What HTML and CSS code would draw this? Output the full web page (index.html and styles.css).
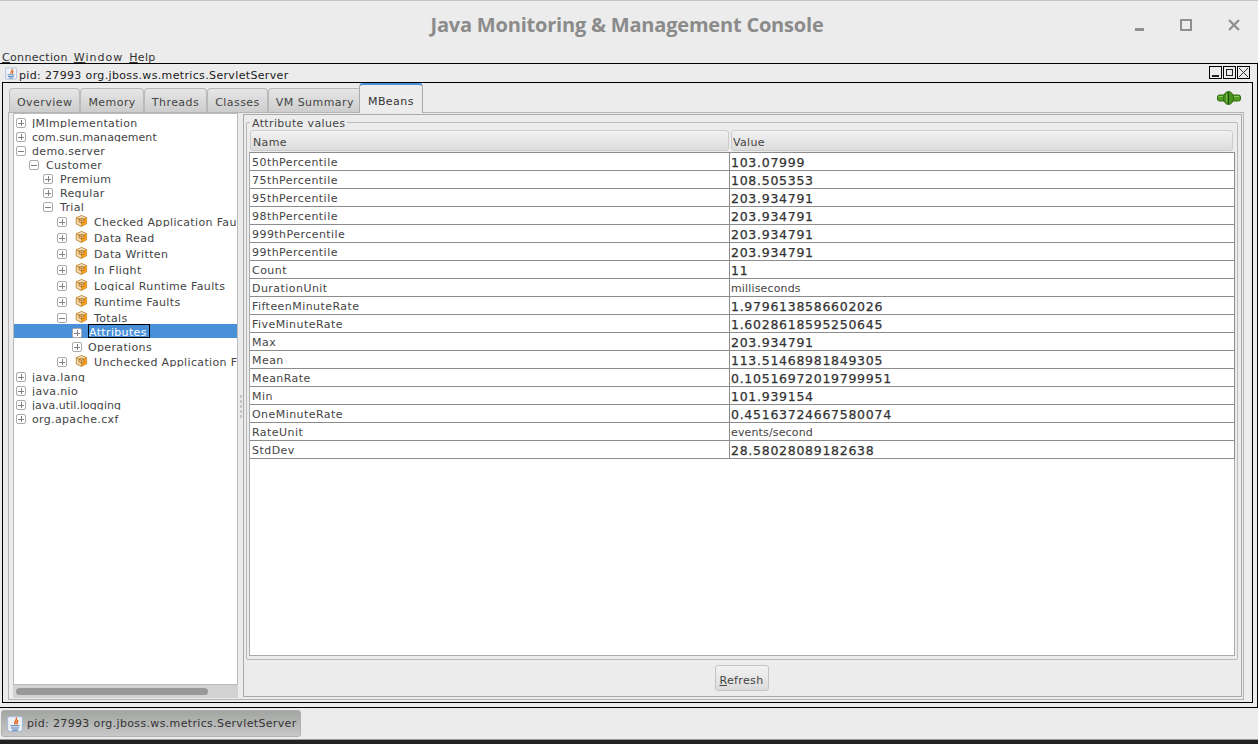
FILE: index.html
```html
<!DOCTYPE html>
<html lang="en">
<head>
    <meta charset="UTF-8">
    <title>Java Monitoring &amp; Management Console</title>
    <link rel="stylesheet" href="styles.css">
</head>
<body>
    <svg class="defs" width="0" height="0">
        <symbol id="cube" viewBox="0 0 14 14">
            <path d="M7 .7 13 3.200V10.300L7 13.300 1 10.300V3.200Z" fill="#ff9f10" stroke="#b8842e" stroke-width=".8"/>
            <path d="M1 3.200 7 5.700V13.300L1 10.300Z" fill="#f8dcae" stroke="#b8842e" stroke-width=".8"/>
            <path d="M7 .7 13 3.200 7 5.700 1 3.200Z" fill="#fbe8ca" stroke="#b8842e" stroke-width=".8"/>
            <path d="M7 3.500 10 4.800V8L7 9.500 4 8V4.800Z" fill="#f4b86a" stroke="#8a6020" stroke-width=".7"/>
            <path d="M4 4.800 7 6.200 10 4.800M7 6.200V9.500" fill="none" stroke="#8a6020" stroke-width=".6"/>
        </symbol>
        <symbol id="java" viewBox="0 0 14 14">
            <rect x=".5" y=".5" width="13" height="13" rx="1.500" fill="#eef2f8" stroke="#a8bcd6"/>
            <path d="M8 1.500C9.500 3.500 5.800 4.500 7 7.500M9.800 3.800C8.200 4.800 8.500 6 9 7.500" fill="none" stroke="#e0611a" stroke-width="1.300"/>
            <path d="M3 8.500H11M3.500 10.500H10.500M4.500 12.300H9.500" stroke="#4a7bb0"/>
        </symbol>
    </svg>

    <header class="titlebar">
        <h1>Java Monitoring &amp; Management Console</h1>
        <div class="wm-buttons">
            <span class="wm-min"></span>
            <span class="wm-max"></span>
            <svg width="12" height="12" viewBox="0 0 12 12"><path d="M1 1 11 11M11 1 1 11" stroke="#8f8f8f" stroke-width="2.300"/></svg>
        </div>
    </header>

    <nav class="menubar">
        <span><u>C</u>onnection</span>
        <span class="menu-wide"><u>W</u>indow</span>
        <span><u>H</u>elp</span>
    </nav>

    <main class="frame">
        <div class="frame-title">
            <svg class="frame-icon" width="12" height="13"><use href="#java"/></svg>
            <span class="frame-name">pid: 27993 org.jboss.ws.metrics.ServletServer</span>
            <div class="frame-buttons">
                <span class="fb"><i class="fb-min"></i></span>
                <span class="fb"><i class="fb-max"></i></span>
                <span class="fb"><svg width="11" height="11" viewBox="0 0 11 11"><path d="M1 1 10 10M10 1 1 10" stroke="#333" fill="none"/></svg></span>
            </div>
        </div>
        <div class="frame-body">
            <div class="tabs">
                <span class="tab">Overview</span>
                <span class="tab">Memory</span>
                <span class="tab">Threads</span>
                <span class="tab">Classes</span>
                <span class="tab">VM Summary</span>
                <span class="tab active">MBeans</span>
                <svg class="plug" width="24" height="14" viewBox="0 0 24 14">
                    <rect x=".5" y="4" width="23" height="6" rx="2" fill="#559c24" stroke="#2f6a12"/>
                    <path d="M1.500 5.500H22" stroke="#8cc85a"/>
                    <ellipse cx="11.500" cy="7" rx="5" ry="6.500" fill="#47921a" stroke="#2f6a12"/>
                    <path d="M11.500 1V13" stroke="#1f4f0a"/>
                    <path d="M9.500 3V11" stroke="#7ab84a"/>
                </svg>
            </div>
            <div class="tab-panel">
                <aside class="tree-pane">
                    <div class="tree">
                        <div class="node"><b class="box"></b><span class="label">JMImplementation</span></div>
                        <div class="node"><b class="box"></b><span class="label tight">com.sun.management</span></div>
                        <div class="node"><b class="box open"></b><span class="label">demo.server</span></div>
                        <div class="node l1"><b class="box open"></b><span class="label">Customer</span></div>
                        <div class="node l2"><b class="box"></b><span class="label">Premium</span></div>
                        <div class="node l2"><b class="box"></b><span class="label">Regular</span></div>
                        <div class="node l2"><b class="box open"></b><span class="label">Trial</span></div>
                        <div class="node l3 tall"><b class="box"></b><svg class="cube"><use href="#cube"/></svg><span class="label">Checked Application Fau</span></div>
                        <div class="node l3 tall"><b class="box"></b><svg class="cube"><use href="#cube"/></svg><span class="label">Data Read</span></div>
                        <div class="node l3 tall"><b class="box"></b><svg class="cube"><use href="#cube"/></svg><span class="label">Data Written</span></div>
                        <div class="node l3 tall"><b class="box"></b><svg class="cube"><use href="#cube"/></svg><span class="label">In Flight</span></div>
                        <div class="node l3 tall"><b class="box"></b><svg class="cube"><use href="#cube"/></svg><span class="label">Logical Runtime Faults</span></div>
                        <div class="node l3 tall"><b class="box"></b><svg class="cube"><use href="#cube"/></svg><span class="label">Runtime Faults</span></div>
                        <div class="node l3 tall"><b class="box open"></b><svg class="cube"><use href="#cube"/></svg><span class="label">Totals</span></div>
                        <div class="node l4 selected"><b class="box"></b><span class="label focus">Attributes</span></div>
                        <div class="node l4"><b class="box"></b><span class="label">Operations</span></div>
                        <div class="node l3 tall"><b class="box"></b><svg class="cube"><use href="#cube"/></svg><span class="label">Unchecked Application F</span></div>
                        <div class="node"><b class="box"></b><span class="label">java.lang</span></div>
                        <div class="node"><b class="box"></b><span class="label">java.nio</span></div>
                        <div class="node"><b class="box"></b><span class="label tight">java.util.logging</span></div>
                        <div class="node"><b class="box"></b><span class="label">org.apache.cxf</span></div>
                    </div>
                    <div class="hscroll"><div class="thumb"></div></div>
                </aside>
                <div class="splitter"><i></i><i></i><i></i><i></i><i></i></div>
                <section class="details">
                    <fieldset class="attrs">
                        <legend>Attribute values</legend>
                        <div class="table-head">
                            <span class="col-name">Name</span>
                            <span class="col-value">Value</span>
                        </div>
                        <div class="table-body">
                            <div class="row"><span class="col-name">50thPercentile</span><span class="col-value num">103.07999</span></div>
                            <div class="row"><span class="col-name">75thPercentile</span><span class="col-value num">108.505353</span></div>
                            <div class="row"><span class="col-name">95thPercentile</span><span class="col-value num">203.934791</span></div>
                            <div class="row"><span class="col-name">98thPercentile</span><span class="col-value num">203.934791</span></div>
                            <div class="row"><span class="col-name">999thPercentile</span><span class="col-value num">203.934791</span></div>
                            <div class="row"><span class="col-name">99thPercentile</span><span class="col-value num">203.934791</span></div>
                            <div class="row"><span class="col-name">Count</span><span class="col-value num">11</span></div>
                            <div class="row"><span class="col-name">DurationUnit</span><span class="col-value">milliseconds</span></div>
                            <div class="row"><span class="col-name">FifteenMinuteRate</span><span class="col-value num">1.9796138586602026</span></div>
                            <div class="row"><span class="col-name">FiveMinuteRate</span><span class="col-value num">1.6028618595250645</span></div>
                            <div class="row"><span class="col-name">Max</span><span class="col-value num">203.934791</span></div>
                            <div class="row"><span class="col-name">Mean</span><span class="col-value num">113.51468981849305</span></div>
                            <div class="row"><span class="col-name">MeanRate</span><span class="col-value num">0.10516972019799951</span></div>
                            <div class="row"><span class="col-name">Min</span><span class="col-value num">101.939154</span></div>
                            <div class="row"><span class="col-name">OneMinuteRate</span><span class="col-value num">0.45163724667580074</span></div>
                            <div class="row"><span class="col-name">RateUnit</span><span class="col-value">events/second</span></div>
                            <div class="row"><span class="col-name">StdDev</span><span class="col-value num">28.58028089182638</span></div>
                        </div>
                    </fieldset>
                    <div class="actions"><button class="refresh"><u>R</u>efresh</button></div>
                </section>
            </div>
        </div>
    </main>

    <footer class="taskbar">
        <div class="task">
            <svg width="16" height="16"><use href="#java"/></svg>
            <span>pid: 27993 org.jboss.ws.metrics.ServletServer</span>
        </div>
    </footer>
</body>
</html>
```
FILE: styles.css
```css
* {
    box-sizing: border-box;
}
html, body {
    margin: 0;
    height: 744px;
    overflow: hidden;
}
body {
    font-family: "DejaVu Sans", sans-serif;
    font-size: 11px;
    letter-spacing: 0.35px;
    background: #ececec;
    color: #444;
    display: flex;
    flex-direction: column;
}
.defs {
    position: absolute;
}
.titlebar {
    height: 50px;
    flex: none;
    display: flex;
    align-items: center;
    justify-content: center;
    position: relative;
    border-top: 1px solid #c4c4c4;
    padding: 0 4px 2px 0;
}
.titlebar h1 {
    margin: 0;
    font-family: "Open Sans", sans-serif;
    font-size: 20px;
    font-weight: 700;
    letter-spacing: -0.2px;
    color: #8b8b8b;
}
.wm-buttons {
    position: absolute;
    right: 18px;
    top: 18px;
    display: flex;
    align-items: center;
    gap: 36px;
}
.wm-min {
    width: 9px;
    height: 3px;
    margin-top: 9px;
    background: #8f8f8f;
}
.wm-max {
    width: 12px;
    height: 12px;
    border: 2px solid #8f8f8f;
}
.menubar {
    height: 13px;
    flex: none;
    display: flex;
    gap: 6px;
    padding-left: 2px;
    color: #333;
}
.menubar span {
    height: 13px;
    line-height: 13px;
    padding-top: 1px;
}
.menu-wide {
    letter-spacing: 1px;
}
.frame {
    flex: 1;
    min-height: 0;
    display: flex;
    flex-direction: column;
    border: 1px solid #000;
    border-left: 0;
}
.frame-title {
    height: 18px;
    flex: none;
    display: flex;
    align-items: flex-start;
    gap: 2px;
    padding: 0 7px 0 5px;
    color: #222;
}
.frame-icon {
    margin-top: 3px;
}
.frame-name {
    line-height: 14px;
    margin-top: 5px;
}
.frame-buttons {
    margin-left: auto;
    margin-top: 2px;
    display: flex;
    gap: 1px;
}
.fb {
    width: 13px;
    height: 13px;
    border: 1px solid #000;
    display: flex;
    align-items: center;
    justify-content: center;
}
.fb-min {
    width: 7px;
    height: 2px;
    background: #222;
    margin-top: 7px;
}
.fb-max {
    width: 7px;
    height: 7px;
    border: 1px solid #222;
}
.frame-body {
    flex: 1;
    min-height: 0;
    margin: 0 4px 4px 2px;
    border: 1px solid #000;
    padding: 0 8px 2px 5px;
    display: flex;
    flex-direction: column;
}
.tabs {
    height: 30px;
    flex: none;
    display: flex;
    align-items: flex-end;
    position: relative;
    border-bottom: 1px solid #b4b4b4;
    padding-left: 1px;
}
.tab {
    height: 24px;
    padding: 5px 7px 0;
    border: 1px solid #b9b9b9;
    border-bottom: 0;
    border-radius: 4px 4px 0 0;
    background: linear-gradient(#e6e6e6, #cdcdcd);
    color: #444;
    line-height: 18px;
    letter-spacing: 0.45px;
    white-space: nowrap;
}
.tab.active {
    height: 30px;
    margin: 0 0 -1px -3px;
    padding: 8px 8px 0;
    background: #ececec;
    border-color: #aaa;
    border-top: 2px solid #4a90d9;
    color: #333;
}
.plug {
    position: absolute;
    right: 3px;
    top: 8px;
}
.tab-panel {
    flex: 1;
    min-height: 0;
    display: flex;
    padding: 0 1px 0 4px;
    border: 1px solid #b4b4b4;
    border-top: 0;
}
.tree-pane {
    width: 225px;
    flex: none;
    margin-bottom: 1px;
    display: flex;
    flex-direction: column;
}
.tree {
    flex: 1;
    min-height: 0;
    background: #fff;
    border: 1px solid #bbb;
    overflow: hidden;
}
/* each row paints over the descenders of the row above, as the java tree does */
.node {
    position: relative;
    height: 14px;
    display: flex;
    align-items: flex-start;
    white-space: nowrap;
    padding-left: 2px;
    background: #fff;
}
.node.tall {
    height: 16px;
}
.tall + .node {
    box-shadow: 0 -1px 0 #fff;
}
.l1 { padding-left: 15px; }
.l2 { padding-left: 29px; }
.l3 { padding-left: 43px; }
.l4 { padding-left: 58px; }
.label {
    display: block;
    margin-top: 2px;
    line-height: 15px;
}
.tight {
    letter-spacing: 0.05px;
}
.tall .label {
    margin-top: 3px;
}
.box {
    width: 10px;
    height: 10px;
    flex: none;
    margin: 4px 6px 0 0;
    border: 1px solid #aaa;
    border-radius: 2px;
    background:
        linear-gradient(#808080, #808080) center / 6px 1px no-repeat,
        linear-gradient(#808080, #808080) center / 1px 6px no-repeat,
        #fff;
}
.box.open {
    background:
        linear-gradient(#808080, #808080) center / 6px 1px no-repeat,
        #fff;
}
.l1 .box, .l2 .box {
    margin-right: 7px;
}
.tall .box {
    margin: 5px 8px 0 0;
}
.cube {
    width: 13px;
    height: 12px;
    flex: none;
    margin: 3px 6px 0 0;
}
.selected {
    background: #4a90d9;
}
.selected .label {
    color: #fff;
}
.label.focus {
    height: 14px;
    margin-top: 0;
    border: 1px solid #000;
    padding: 1px 2px 0 0;
    line-height: 13px;
}
.hscroll {
    height: 13px;
    flex: none;
    background: #d2d2d2;
    display: flex;
    align-items: center;
    padding-left: 3px;
}
.thumb {
    width: 192px;
    height: 7px;
    border-radius: 4px;
    background: #999;
}
.splitter {
    width: 5px;
    flex: none;
    display: flex;
    flex-direction: column;
    justify-content: center;
    align-items: center;
    gap: 2px;
}
.splitter i {
    width: 2px;
    height: 3px;
    background: #c4c4c4;
}
.details {
    flex: 1;
    min-width: 0;
    margin: 1px 0 2px;
    border: 1px solid #aaa;
    padding: 1px 3px 0 2px;
    display: flex;
    flex-direction: column;
}
.attrs {
    flex: 1;
    min-height: 0;
    margin: 0;
    padding: 1px 2px 3px;
    border: 1px solid #bbb;
    border-radius: 2px;
    display: flex;
    flex-direction: column;
}
.attrs legend {
    padding: 0 2px;
    margin-left: 1px;
    height: 13px;
    line-height: 15px;
}
.table-head {
    display: flex;
    height: 21px;
    flex: none;
    margin: 0 2px 1px 1px;
}
.table-head span {
    border: 1px solid #ccc;
    border-radius: 3px;
    background: linear-gradient(#f2f2f2, #dcdcdc);
    padding: 4px 2px 0;
    line-height: 15px;
}
.table-head .col-name {
    width: 479px;
    flex: none;
}
.table-head .col-value {
    flex: 1;
    margin-left: 2px;
    padding-left: 1px;
}
.table-body {
    flex: 1;
    background: #fff;
    border: 1px solid #aaa;
    border-top-color: #8c8c8c;
}
.row {
    height: 18px;
    display: flex;
    border-bottom: 1px solid #8c8c8c;
    margin-right: -1px;
    line-height: 14px;
}
.row span {
    padding-top: 3px;
}
.row .col-name {
    width: 480px;
    flex: none;
    padding-left: 2px;
    border-right: 1px solid #8c8c8c;
    letter-spacing: 0.45px;
}
.row .col-value {
    flex: 1;
    padding-left: 1px;
    border-right: 1px solid #8c8c8c;
    letter-spacing: 0.15px;
}
.row .num {
    font-size: 12.5px;
    letter-spacing: 0.72px;
    color: #333;
    -webkit-text-stroke: 0.25px #333;
}
.actions {
    height: 36px;
    flex: none;
    display: flex;
    align-items: center;
    justify-content: center;
}
.refresh {
    height: 26px;
    width: 54px;
    margin-right: 1px;
    padding: 4px 0 0;
    font: inherit;
    letter-spacing: inherit;
    color: #444;
    border: 1px solid #c4c4c4;
    border-radius: 3px;
    background: linear-gradient(#f2f2f2, #dcdcdc);
}
.taskbar {
    height: 36px;
    flex: none;
    padding: 2px 0 0 1px;
    border-bottom: 4px solid #222;
    box-shadow: inset 0 -1px 0 #999;
}
.task {
    width: 300px;
    height: 27px;
    display: flex;
    align-items: center;
    gap: 4px;
    padding-left: 5px;
    border-radius: 3px;
    background: linear-gradient(#a2a5a2, #c8c8c8);
    border: 1px solid #b0b0b0;
    white-space: nowrap;
    color: #333;
}
```
